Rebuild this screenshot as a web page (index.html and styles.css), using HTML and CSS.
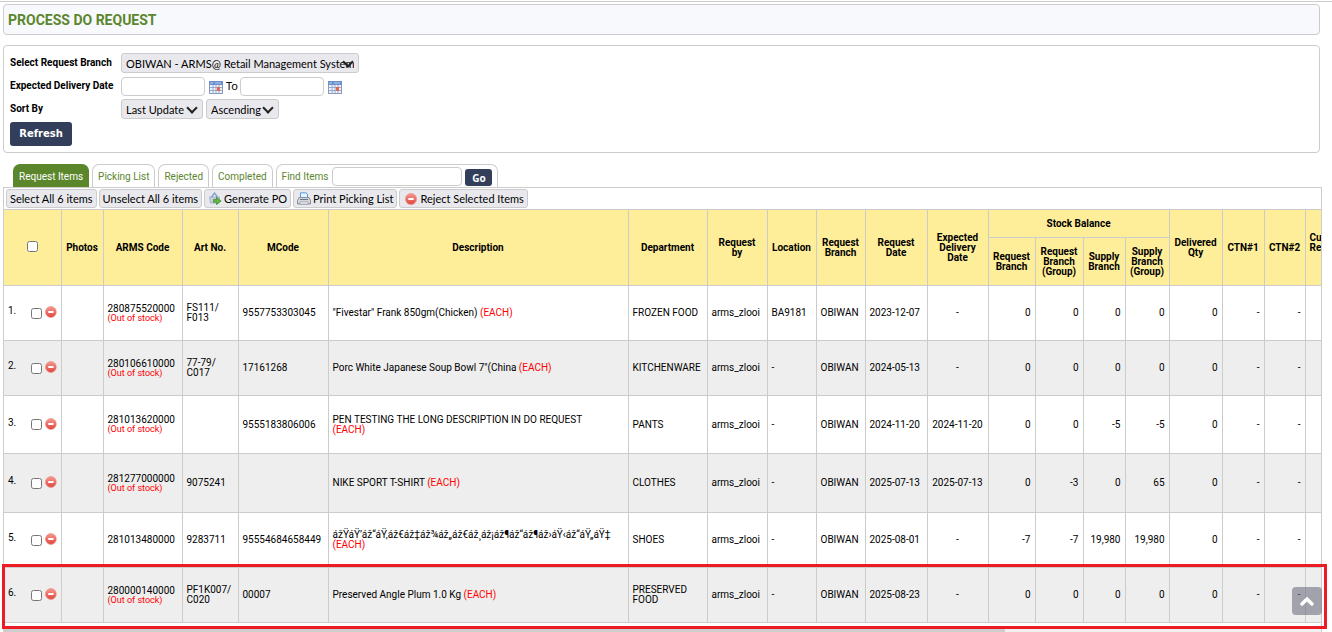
FILE: index.html
```html
<!DOCTYPE html>
<html lang="en">
<head>
<meta charset="utf-8">
<title>Process DO Request</title>
<link rel="stylesheet" href="styles.css">
</head>
<body>
<svg class="defs" width="0" height="0" aria-hidden="true">
  <defs>
    <linearGradient id="redball" x1="0" y1="0" x2="0" y2="1"><stop offset="0" stop-color="#f59a90"/><stop offset="1" stop-color="#e0453b"/></linearGradient>
    <symbol id="minus" viewBox="0 0 12 12"><circle cx="6" cy="6" r="5.5" fill="url(#redball)" stroke="#eb8b82" stroke-width=".7"/><rect x="3.2" y="5" width="5.6" height="1.9" rx=".6" fill="#fff"/></symbol>
    <symbol id="calendar" viewBox="0 0 14 13"><rect x=".5" y="1" width="13" height="11.5" fill="#eef3fb" stroke="#8799bd"/><rect x="0" y="0" width="14" height="4" fill="#6c90cc"/><path d="M1 2h3M6 2h6" stroke="#b5cbed"/><path d="M1 6.5h12M1 9.5h12M4 4v8M7 4v8M10 4v8" stroke="#8fa3c8" stroke-width=".9"/><rect x="8" y="6" width="3" height="4" fill="#e2654f"/></symbol>
    <symbol id="basket" viewBox="0 0 13 13"><path d="M1 5h10l-1 6H2z" fill="#c5cfdf" stroke="#9aa8bf" stroke-width=".8"/><path d="M3 5 6 1l3 4" fill="none" stroke="#7fa2cf" stroke-width="1.4"/><path d="M5 7.5h3V5.2L12.6 9 8 12.7v-2.4H5z" fill="#65b645" stroke="#39852a" stroke-width=".7"/></symbol>
    <symbol id="printer" viewBox="0 0 14 13"><path d="M3.5 6V.8h5.5L10.5 2v4" fill="#e8f3ff" stroke="#5d9be0"/><path d="M2 5.5h10l1.5 3v3.5H.5V8.500z" fill="#d3d6dc" stroke="#7d8594" stroke-width=".9"/><path d="M3 7.500h8" stroke="#6b7382"/><path d="M3 10h8v2H3z" fill="#fff" stroke="#8d94a1" stroke-width=".7"/></symbol>
  </defs>
</svg>
<header class="title"><h1>PROCESS DO REQUEST</h1></header>
<form class="filters">
  <div class="field"><label for="branch">Select Request Branch</label><span class="select wide"><select id="branch"><option>OBIWAN - ARMS@ Retail Management System</option></select></span></div>
  <div class="field"><label for="from">Expected Delivery Date</label><input class="date" id="from" type="text"><svg class="cal" role="img" aria-label="Pick date"><use href="#calendar"/></svg><label class="to" for="until">To</label><input class="date" id="until" type="text"><svg class="cal" role="img" aria-label="Pick date"><use href="#calendar"/></svg></div>
  <div class="field"><label for="sort">Sort By</label><span class="select update"><select id="sort"><option>Last Update</option></select></span><span class="select order"><select aria-label="Sort order"><option>Ascending</option></select></span></div>
  <button class="dark refresh" type="button">Refresh</button>
</form>
<nav class="tabs">
  <a class="tab active" href="#">Request Items</a><a class="tab" href="#">Picking List</a><a class="tab" href="#">Rejected</a><a class="tab" href="#">Completed</a>
  <div class="tab find"><label for="find">Find Items</label><input id="find" type="text"><button class="dark go" type="button">Go</button></div>
</nav>
<main class="panel">
  <div class="toolbar">
    <button type="button">Select All 6 items</button><button type="button">Unselect All 6 items</button><button type="button"><svg class="tool"><use href="#basket"/></svg>Generate PO</button><button type="button"><svg class="tool"><use href="#printer"/></svg>Print Picking List</button><button type="button"><svg class="tool small"><use href="#minus"/></svg>Reject Selected Items</button>
  </div>
  <div class="scroll">
  <table>
    <colgroup><col class="w57"><col class="w42"><col class="w79"><col class="w56"><col class="w90"><col class="w300"><col class="w79"><col class="w60"><col class="w49"><col class="w49"><col class="w62"><col class="w61"><col class="w47"><col class="w48"><col class="w42"><col class="w44"><col class="w53"><col class="w42"><col class="w41"><col class="w56"></colgroup>
    <thead>
      <tr class="top"><th rowspan="2"><input type="checkbox" aria-label="Select all"></th><th rowspan="2">Photos</th><th rowspan="2">ARMS Code</th><th rowspan="2">Art No.</th><th rowspan="2">MCode</th><th rowspan="2">Description</th><th rowspan="2">Department</th><th rowspan="2">Request<br>by</th><th rowspan="2">Location</th><th rowspan="2">Request Branch</th><th rowspan="2">Request Date</th><th rowspan="2">Expected Delivery Date</th><th colspan="4">Stock Balance</th><th rowspan="2">Delivered Qty</th><th rowspan="2">CTN#1</th><th rowspan="2">CTN#2</th><th class="last" rowspan="2">Cu<br>Re</th></tr>
      <tr class="sub"><th>Request Branch</th><th>Request Branch (Group)</th><th>Supply Branch</th><th>Supply Branch (Group)</th></tr>
    </thead>
    <tbody>
      <tr class="r55"><td><div class="pick"><span>1.</span><input type="checkbox" aria-label="Item 1"><svg><use href="#minus"/></svg></div></td><td></td><td>280875520000<small>(Out of stock)</small></td><td>FS111/<br>F013</td><td>9557753303045</td><td>"Fivestar" Frank 850gm(Chicken) <em>(EACH)</em></td><td>FROZEN FOOD</td><td>arms_zlooi</td><td>BA9181</td><td>OBIWAN</td><td>2023-12-07</td><td class="mid">-</td><td class="num">0</td><td class="num">0</td><td class="num">0</td><td class="num">0</td><td class="num">0</td><td class="num">-</td><td class="num">-</td><td></td></tr>
      <tr class="r55"><td><div class="pick"><span>2.</span><input type="checkbox" aria-label="Item 2"><svg><use href="#minus"/></svg></div></td><td></td><td>280106610000<small>(Out of stock)</small></td><td>77-79/<br>C017</td><td>17161268</td><td>Porc White Japanese Soup Bowl 7"(China <em>(EACH)</em></td><td>KITCHENWARE</td><td>arms_zlooi</td><td>-</td><td>OBIWAN</td><td>2024-05-13</td><td class="mid">-</td><td class="num">0</td><td class="num">0</td><td class="num">0</td><td class="num">0</td><td class="num">0</td><td class="num">-</td><td class="num">-</td><td></td></tr>
      <tr class="r58"><td><div class="pick"><span>3.</span><input type="checkbox" aria-label="Item 3"><svg><use href="#minus"/></svg></div></td><td></td><td>281013620000<small>(Out of stock)</small></td><td></td><td>9555183806006</td><td>PEN TESTING THE LONG DESCRIPTION IN DO REQUEST<br><em>(EACH)</em></td><td>PANTS</td><td>arms_zlooi</td><td>-</td><td>OBIWAN</td><td>2024-11-20</td><td class="mid">2024-11-20</td><td class="num">0</td><td class="num">0</td><td class="num">-5</td><td class="num">-5</td><td class="num">0</td><td class="num">-</td><td class="num">-</td><td></td></tr>
      <tr class="r59"><td><div class="pick"><span>4.</span><input type="checkbox" aria-label="Item 4"><svg><use href="#minus"/></svg></div></td><td></td><td>281277000000<small>(Out of stock)</small></td><td>9075241</td><td></td><td>NIKE SPORT T-SHIRT <em>(EACH)</em></td><td>CLOTHES</td><td>arms_zlooi</td><td>-</td><td>OBIWAN</td><td>2025-07-13</td><td class="mid">2025-07-13</td><td class="num">0</td><td class="num">-3</td><td class="num">0</td><td class="num">65</td><td class="num">0</td><td class="num">-</td><td class="num">-</td><td></td></tr>
      <tr class="r55"><td><div class="pick"><span>5.</span><input type="checkbox" aria-label="Item 5"><svg><use href="#minus"/></svg></div></td><td></td><td>281013480000</td><td>9283711</td><td>95554684658449</td><td>ážŸáŸ’áž“áŸ‚áž€áž‡áž¾áž„áž€áž¸áž¡áž¶áž“áž¶áž›áŸ‹áž“áŸ„áŸ‡<br><em>(EACH)</em></td><td>SHOES</td><td>arms_zlooi</td><td>-</td><td>OBIWAN</td><td>2025-08-01</td><td class="mid">-</td><td class="num">-7</td><td class="num">-7</td><td class="num">19,980</td><td class="num">19,980</td><td class="num">0</td><td class="num">-</td><td class="num">-</td><td></td></tr>
      <tr class="r55"><td><div class="pick"><span>6.</span><input type="checkbox" aria-label="Item 6"><svg><use href="#minus"/></svg></div></td><td></td><td>280000140000<small>(Out of stock)</small></td><td>PF1K007/<br>C020</td><td>00007</td><td>Preserved Angle Plum 1.0 Kg <em>(EACH)</em></td><td>PRESERVED FOOD</td><td>arms_zlooi</td><td>-</td><td>OBIWAN</td><td>2025-08-23</td><td class="mid">-</td><td class="num">0</td><td class="num">0</td><td class="num">0</td><td class="num">0</td><td class="num">0</td><td class="num">-</td><td class="num">-</td><td></td></tr>
    </tbody>
  </table>
  </div>
  <div class="scrollbar"><div class="thumb"></div></div>
  <div class="marker"></div>
</main>
<button class="up" type="button" aria-label="Back to top"><svg viewBox="0 0 14 9"><path d="M2 7l5-5 5 5" fill="none" stroke="#fff" stroke-width="3.4" stroke-linecap="round"/></svg></button>
</body>
</html>
```
FILE: styles.css
```css
* { box-sizing: border-box; }
html { overflow: hidden; }
body { margin: 0; padding: 1px 12px 0 3px; background: #fff; color: #000; font: 10px/10px Roboto, sans-serif; }
body::before { content: ""; display: block; height: 1px; margin: 0 -12px 2px -3px; background: #ccc; }
.defs { position: absolute; }
button, input, select { font-family: Lato, sans-serif; font-size: 11px; color: #000; }
.title { height: 31px; padding-left: 4px; border: 1px solid #ccc; border-radius: 4px; background: #f8f9fd; display: flex; align-items: center; }
h1 { margin: 0; font-size: 14px; line-height: 18px; color: #5b862c; }
.filters { margin-top: 10px; padding: 7px 6px 6px; border: 1px solid #ccc; border-radius: 4px; }
.field { display: flex; align-items: center; height: 20px; margin-bottom: 3px; }
.field label { width: 111px; font-weight: bold; white-space: nowrap; }
.select { position: relative; display: flex; height: 20px; }
.select::after { content: ""; position: absolute; right: 7px; top: 5px; width: 6px; height: 6px; border: solid #222; border-width: 0 2px 2px 0; transform: rotate(45deg); pointer-events: none; }
select { appearance: none; width: 100%; height: 20px; padding: 0 4px; border: 1px solid #ccc; border-radius: 3px; background: #e9e9ed; }
.wide { width: 238px; }
.update { width: 82px; margin-right: 3px; }
.order { width: 73px; }
input[type=text] { border: 1px solid #ccc; border-radius: 4px; background: #fff; height: 19px; padding: 0 4px; }
.date { width: 84px; }
.cal { width: 14px; height: 13px; margin: 3px 3px 0 4px; }
.field .to { width: 14px; font: 11px/12px "Noto Sans", sans-serif; }
.dark { border: 0; border-radius: 3px; background: #323e5a; color: #fff; font: bold 10px/14px "DejaVu Sans", sans-serif; }
.refresh { display: block; width: 62px; height: 24px; padding: 0; }
.tabs { display: flex; gap: 3px; height: 23px; margin-top: 11px; padding-left: 10px; }
.tab { display: flex; align-items: center; height: 23px; padding: 2px 5px 0; border: 1px solid #ccc; border-bottom: 0; border-radius: 7px 7px 0 0; color: #5b862c; text-decoration: none; white-space: nowrap; }
.active { background: #5b862c; border-color: #5b862c; color: #fff; }
.find input { width: 130px; margin: 0 3px 2px 4px; }
.go { width: 27px; height: 17px; margin-top: 1px; padding: 0; font-family: "Noto Sans", sans-serif; }
.panel { position: relative; border: 1px solid #ccc; border-bottom: 0; margin-right: -2px; }
.toolbar { display: flex; gap: 2px; padding: 1px 2px; height: 21px; }
.toolbar button { display: flex; align-items: center; height: 19px; padding: 0 3px; border: 1px solid #ccc; border-radius: 3px; background: #e9e9ed; white-space: nowrap; }
.tool { width: 14px; height: 13px; margin-right: 2px; }
.small { width: 12px; height: 12px; margin-left: 2px; margin-right: 3px; }
.scroll { overflow: hidden; }
table { table-layout: fixed; width: 1357px; border-collapse: collapse; }
.w41 { width: 41px; } .w42 { width: 42px; } .w44 { width: 44px; } .w47 { width: 47px; } .w48 { width: 48px; } .w49 { width: 49px; }
.w53 { width: 53px; } .w56 { width: 56px; } .w57 { width: 57px; } .w60 { width: 60px; } .w61 { width: 61px; } .w62 { width: 62px; }
.w79 { width: 79px; } .w90 { width: 90px; } .w300 { width: 300px; }
th, td { padding: 0 4px; border: 1px solid #ccc; }
tr > :first-child { border-left: 0; }
.sub > :first-child { border-left: 1px solid #ccc; }
th { background: #fe9; }
.sub th, .top th { padding: 0 2px; }
.top .last { padding: 0 0 10px 4px; text-align: left; }
.top { height: 28px; } .sub { height: 48px; }
.r55 { height: 55px; } .r58 { height: 58px; } .r59 { height: 59px; }
tbody tr:nth-child(even) { background: #eee; }
small { display: block; font-size: 9px; line-height: 9px; color: #f00; }
em { font-style: normal; color: #f00; }
.num { text-align: right; }
.mid { text-align: center; white-space: nowrap; }
input[type=checkbox] { width: 11px; height: 11px; margin: 0; }
.pick { display: flex; align-items: center; }
.pick span { width: 23px; margin-bottom: 4px; }
.pick input { margin-right: 3px; }
.pick svg { width: 12px; height: 12px; margin-bottom: 2px; }
.scrollbar { height: 10px; margin-top: 6px; background: #f0f0f0; }
.thumb { width: 76%; height: 10px; background: #cdcdcd; }
.marker { position: absolute; left: -2px; right: -6px; bottom: 10px; height: 65px; border: 3px solid #ed1c24; }
.up { position: fixed; right: 10px; bottom: 17px; width: 30px; height: 28px; padding: 0; border: 0; border-radius: 4px; background: rgba(112, 112, 128, .6); display: grid; place-items: center; }
.up svg { width: 14px; height: 9px; }
```
